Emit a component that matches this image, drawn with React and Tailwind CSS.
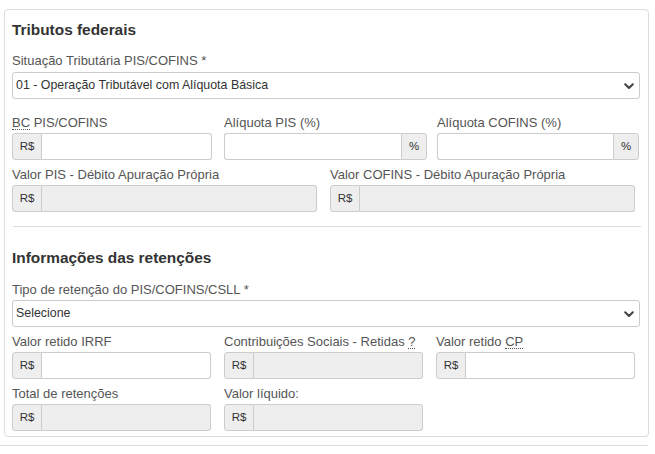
import React from "react";

const font = { fontFamily: '"Liberation Sans", Arial, sans-serif' };

function Chevron() {
  return (
    <svg width="10" height="7" viewBox="0 0 10 7" className="absolute right-[5px] top-[10px]">
      <path d="M1.2 1.3 L5 5 L8.8 1.3" fill="none" stroke="#444" strokeWidth="2.1" strokeLinecap="round" strokeLinejoin="round" />
    </svg>
  );
}

function Select({ text }) {
  return (
    <div className="relative h-[27px] w-[628px] rounded-[3px] border border-[#ccc] bg-white pl-[3px] text-[12.4px] leading-[25px] text-[#333]">
      {text}
      <Chevron />
    </div>
  );
}

function Label({ children }) {
  return <div className="h-[20px] whitespace-nowrap text-[13px] leading-[20px] text-[#555]">{children}</div>;
}

function Abbr({ children }) {
  return <span className="border-b border-dotted border-[#555] leading-[12px] inline-block">{children}</span>;
}

function MoneyInput({ readOnly }) {
  return (
    <div className="flex h-[27px]">
      <div className="flex w-[30px] shrink-0 items-center justify-center rounded-l-[3px] border border-[#ccc] bg-[#eee] text-[11.5px] text-[#333]">
        R$
      </div>
      <div className={`flex-1 rounded-r-[3px] border border-l-0 border-[#ccc] ${readOnly ? "bg-[#eee]" : "bg-white"}`} />
    </div>
  );
}

function PercentInput() {
  return (
    <div className="flex h-[27px]">
      <div className="flex-1 rounded-l-[3px] border border-r-0 border-[#ccc] bg-white" />
      <div className="flex w-[26px] shrink-0 items-center justify-center rounded-r-[3px] border border-[#ccc] bg-[#eee] text-[11.5px] text-[#333]">
        %
      </div>
    </div>
  );
}

export default function App() {
  return (
    <div className="h-[454px] w-[655px] bg-white" style={font}>
      <div className="pt-[9px]">
        <div className="ml-[4px] w-[645px] rounded-[4px] border border-[#ddd] pb-[5px] pl-[7px] pr-[8px] pt-[10px]">
          <div className="h-[20px] text-[15.4px] font-bold leading-[20px] text-[#333]">Tributos federais</div>

          <div className="mt-[11px]">
            <Label>Situação Tributária PIS/COFINS *</Label>
            <div className="mt-px">
              <Select text="01 - Operação Tributável com Alíquota Básica" />
            </div>
          </div>

          <div className="mt-[14px] flex w-[628px]">
            <div className="w-[200px]">
              <Label>
                <Abbr>BC</Abbr> PIS/COFINS
              </Label>
              <MoneyInput />
            </div>
            <div className="ml-[12px] w-[203px]">
              <Label>Alíquota PIS (%)</Label>
              <PercentInput />
            </div>
            <div className="ml-[10px] w-[202px]">
              <Label>Alíquota COFINS (%)</Label>
              <PercentInput />
            </div>
          </div>

          <div className="mt-[5px] grid w-[623px] grid-cols-2 gap-x-[13px]">
            <div>
              <Label>Valor PIS - Débito Apuração Própria</Label>
              <MoneyInput readOnly />
            </div>
            <div>
              <Label>Valor COFINS - Débito Apuração Própria</Label>
              <MoneyInput readOnly />
            </div>
          </div>

          <div className="ml-px mt-[14px] h-px w-[628px] bg-[#ddd]" />

          <div className="mt-[21px] h-[20px] text-[15.4px] font-bold leading-[20px] text-[#333]">Informações das retenções</div>

          <div className="mt-[12px]">
            <Label>Tipo de retenção do PIS/COFINS/CSLL *</Label>
            <Select text="Selecione" />
          </div>

          <div className="mt-[5px] grid w-[623px] grid-cols-3 gap-x-[13px]">
            <div>
              <Label>Valor retido IRRF</Label>
              <MoneyInput />
            </div>
            <div>
              <Label>
                Contribuições Sociais - Retidas <Abbr>?</Abbr>
              </Label>
              <MoneyInput readOnly />
            </div>
            <div>
              <Label>
                Valor retido <Abbr>CP</Abbr>
              </Label>
              <MoneyInput />
            </div>
          </div>

          <div className="mt-[5px] grid w-[623px] grid-cols-3 gap-x-[13px]">
            <div>
              <Label>Total de retenções</Label>
              <MoneyInput readOnly />
            </div>
            <div>
              <Label>Valor líquido:</Label>
              <MoneyInput readOnly />
            </div>
          </div>
        </div>
        <div className="mt-[8px] h-px w-[648px] bg-[#ddd]" />
      </div>
    </div>
  );
}
